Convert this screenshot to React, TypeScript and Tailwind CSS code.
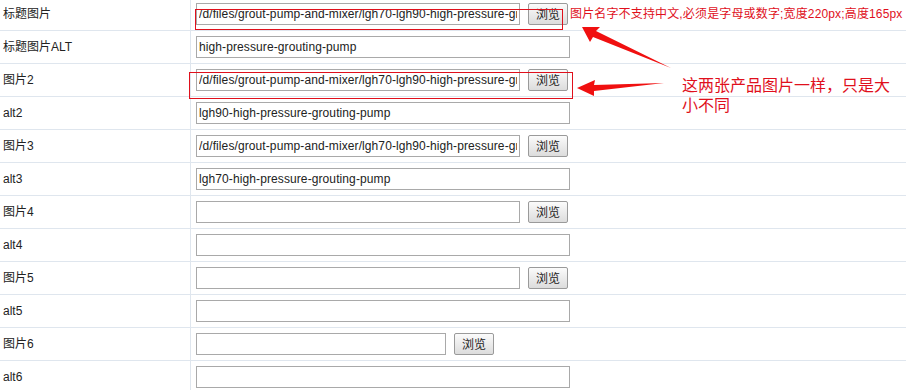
import React from "react";

type Row = { label: string; value?: string; kind: "file" | "text"; short?: boolean };

const ROWS: Row[] = [
  { label: "标题图片", value: "/d/files/grout-pump-and-mixer/lgh70-lgh90-high-pressure-grouting-pump.jpg", kind: "file" },
  { label: "标题图片ALT", value: "high-pressure-grouting-pump", kind: "text" },
  { label: "图片2", value: "/d/files/grout-pump-and-mixer/lgh70-lgh90-high-pressure-grouting-pump-2.jpg", kind: "file" },
  { label: "alt2", value: "lgh90-high-pressure-grouting-pump", kind: "text" },
  { label: "图片3", value: "/d/files/grout-pump-and-mixer/lgh70-lgh90-high-pressure-grouting-pump-3.jpg", kind: "file" },
  { label: "alt3", value: "lgh70-high-pressure-grouting-pump", kind: "text" },
  { label: "图片4", kind: "file" },
  { label: "alt4", kind: "text" },
  { label: "图片5", kind: "file" },
  { label: "alt5", kind: "text" },
  { label: "图片6", kind: "file", short: true },
  { label: "alt6", kind: "text" },
];

const font = "font-['Tahoma','Liberation_Sans','Noto_Sans_CJK_SC',sans-serif]";

function Field({ row }: { row: Row }) {
  const input = (
    <input
      type="text"
      readOnly
      value={row.value ?? ""}
      className={`h-[22px] border border-[#a9a9a9] bg-white px-[2px] text-[12px] tracking-[0.1px] text-[#222] outline-none ${font} ${
        row.kind === "text" ? "w-[374px]" : row.short ? "w-[250px]" : "w-[324px]"
      }`}
    />
  );
  if (row.kind === "text") return input;
  return (
    <div className="flex items-center gap-2">
      {input}
      <button className="h-[22px] w-[40px] rounded-[2px] border border-[#9a9a9a] bg-gradient-to-b from-[#fbfbfb] to-[#dcdcdc] text-[12px] text-[#222] font-['Noto_Sans_CJK_SC',sans-serif]">
        浏览
      </button>
    </div>
  );
}

export default function App() {
  return (
    <div className={`relative h-[390px] w-[906px] overflow-hidden bg-white ${font}`}>
      <div className="-mt-[2px]">
        {ROWS.map((row, i) => (
          <div key={i} className="flex h-[33px] border-b border-[#dfe6ee]">
            <div className="flex w-[191px] items-center border-r border-[#dfe6ee] pl-[3px] text-[12px] text-[#222]">
              {row.label}
            </div>
            <div className="flex flex-1 items-center pl-[5px]">
              <Field row={row} />
              {i === 0 && (
                <span className="ml-[2px] whitespace-nowrap text-[12px] tracking-[0.15px] text-[#e0101c]">
                  图片名字不支持中文,必须是字母或数字;宽度220px;高度165px
                </span>
              )}
            </div>
          </div>
        ))}
      </div>

      {/* annotations */}
      <div className="absolute left-[195px] top-[9px] h-[21px] w-[368px] border border-[#e0101c]" />
      <div className="absolute left-[189px] top-[72px] h-[27px] w-[384px] border border-[#e0101c]" />
      <div className="absolute left-[682px] top-[74px] w-[210px] text-[16px] leading-[20px] text-[#e0101c] font-['Noto_Sans_CJK_SC',sans-serif]">
        这两张产品图片一样，只是大小不同
      </div>
      <svg className="pointer-events-none absolute left-0 top-0" width="906" height="390">
        <path d="M582 27 L600 27 L596 31 L671 68 L593 37 L590 42 Z" fill="#f01010" />
        <path d="M577 88 L595 80 L594 85 L664 83 L594 91 L594 96 Z" fill="#f01010" />
      </svg>
    </div>
  );
}
